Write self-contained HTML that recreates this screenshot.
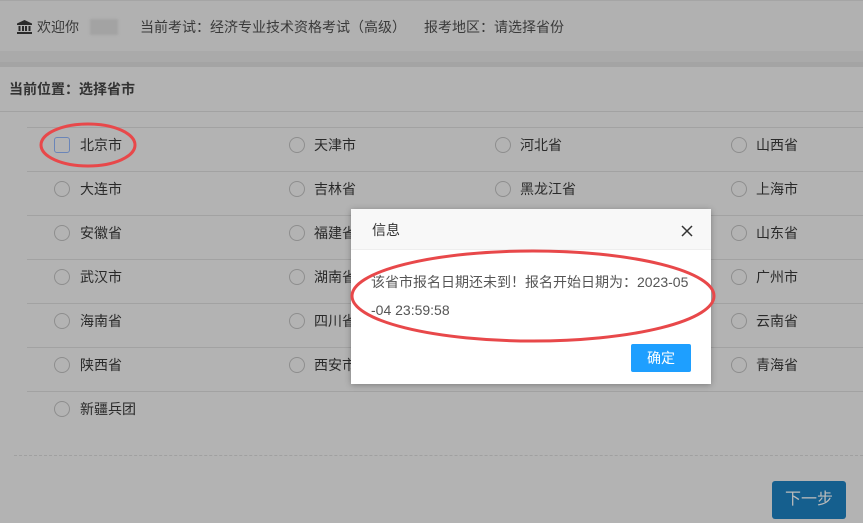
<!DOCTYPE html>
<html><head><meta charset="utf-8"><style>
*{margin:0;padding:0;box-sizing:border-box}
body{width:863px;height:523px;overflow:hidden;background:#b3b3b3;font-family:"Liberation Sans","Noto Sans CJK SC",sans-serif;font-size:14px;line-height:18px;color:#2e2e2e;position:relative}
.hdr{position:absolute;left:0;top:0;width:863px;height:51px;background:#b1b1b1;border-top:1px solid #a5a5a5}
.hdr span{position:absolute;top:17px;color:#3a3a3a}
.band1{position:absolute;left:0;top:51px;width:863px;height:11px;background:#aaaaaa}
.band2{position:absolute;left:0;top:62px;width:863px;height:5px;background:#a4a4a4}
.pos{position:absolute;left:9px;top:80px;font-weight:bold;color:#333}
.l{position:absolute;height:1px;background:#a2a2a2}
.r{position:absolute;width:16px;height:16px;border:1px solid #8e8e8e;border-radius:50%;background:#b3b3b3}
.t{position:absolute;color:#2a2a2a}
.modal{position:absolute;left:351px;top:209px;width:360px;height:175px;background:#fff;box-shadow:0 1px 6px rgba(0,0,0,.3)}
.mh{height:41px;background:#f8f8f8;border-bottom:1px solid #eee;padding:12px 0 0 21px;color:#333}
.mb{padding:18px 20px 0 20px;line-height:28px;color:#555}
.ok{position:absolute;left:280px;top:135px;width:60px;height:28px;background:#1e9fff;color:#fff;border-radius:2px;text-align:center;line-height:28px}
.next{position:absolute;left:772px;top:481px;width:74px;height:38px;background:#155f8e;color:#bbb;border-radius:3px;text-align:center;line-height:38px;font-size:16px}
</style></head><body>
<div class="hdr">
<svg style="position:absolute;left:17px;top:19px" width="15" height="14" viewBox="0 0 15 14"><path d="M7.5 0L0 3.5V5H15V3.5Z M1.5 6H3.5V11H1.5Z M5 6H7V11H5Z M8 6H10V11H8Z M11.5 6H13.5V11H11.5Z M0 12H15V14H0Z" fill="#2a2a2a"/></svg>
<span style="left:37px">欢迎你</span>
<div style="position:absolute;left:90px;top:18px;width:28px;height:16px;background:#a3a3a3;filter:blur(1px)"></div>
<span style="left:140px">当前考试：经济专业技术资格考试（高级）</span>
<span style="left:424px">报考地区：请选择省份</span>
</div>
<div class="band1"></div><div class="band2"></div>
<div class="pos">当前位置：选择省市</div>
<div class="l" style="left:0;top:111px;width:863px"></div>
<div class="l" style="left:27px;top:127px;width:836px"></div>
<div class="l" style="left:27px;top:171px;width:836px"></div>
<div class="l" style="left:27px;top:215px;width:836px"></div>
<div class="l" style="left:27px;top:259px;width:836px"></div>
<div class="l" style="left:27px;top:303px;width:836px"></div>
<div class="l" style="left:27px;top:347px;width:836px"></div>
<div class="l" style="left:27px;top:391px;width:836px"></div>
<div style="position:absolute;left:14px;top:455px;width:849px;border-top:1px dashed #a0a0a0"></div>

<div class="r" style="left:54px;top:137px;border-radius:3px;border-color:#6a85b8"></div><div class="t" style="left:80px;top:136px">北京市</div>
<div class="r" style="left:289px;top:137px"></div><div class="t" style="left:314px;top:136px">天津市</div>
<div class="r" style="left:495px;top:137px"></div><div class="t" style="left:520px;top:136px">河北省</div>
<div class="r" style="left:731px;top:137px"></div><div class="t" style="left:756px;top:136px">山西省</div>

<div class="r" style="left:54px;top:181px"></div><div class="t" style="left:80px;top:180px">大连市</div>
<div class="r" style="left:289px;top:181px"></div><div class="t" style="left:314px;top:180px">吉林省</div>
<div class="r" style="left:495px;top:181px"></div><div class="t" style="left:520px;top:180px">黑龙江省</div>
<div class="r" style="left:731px;top:181px"></div><div class="t" style="left:756px;top:180px">上海市</div>

<div class="r" style="left:54px;top:225px"></div><div class="t" style="left:80px;top:224px">安徽省</div>
<div class="r" style="left:289px;top:225px"></div><div class="t" style="left:314px;top:224px">福建省</div>
<div class="r" style="left:731px;top:225px"></div><div class="t" style="left:756px;top:224px">山东省</div>

<div class="r" style="left:54px;top:269px"></div><div class="t" style="left:80px;top:268px">武汉市</div>
<div class="r" style="left:289px;top:269px"></div><div class="t" style="left:314px;top:268px">湖南省</div>
<div class="r" style="left:731px;top:269px"></div><div class="t" style="left:756px;top:268px">广州市</div>

<div class="r" style="left:54px;top:313px"></div><div class="t" style="left:80px;top:312px">海南省</div>
<div class="r" style="left:289px;top:313px"></div><div class="t" style="left:314px;top:312px">四川省</div>
<div class="r" style="left:731px;top:313px"></div><div class="t" style="left:756px;top:312px">云南省</div>

<div class="r" style="left:54px;top:357px"></div><div class="t" style="left:80px;top:356px">陕西省</div>
<div class="r" style="left:289px;top:357px"></div><div class="t" style="left:314px;top:356px">西安市</div>
<div class="r" style="left:731px;top:357px"></div><div class="t" style="left:756px;top:356px">青海省</div>

<div class="r" style="left:54px;top:401px"></div><div class="t" style="left:80px;top:400px">新疆兵团</div>

<svg style="position:absolute;left:0;top:0" width="863" height="523"><ellipse cx="88" cy="145" rx="47" ry="21" fill="none" stroke="#e8484a" stroke-width="3"/></svg>

<div class="modal">
<div class="mh">信息</div>
<svg style="position:absolute;left:330px;top:16px" width="12" height="12" viewBox="0 0 12 12"><path d="M1 1L11 11M11 1L1 11" stroke="#333" stroke-width="1.5"/></svg>
<div class="mb">该省市报名日期还未到！报名开始日期为：2023-05<br>-04 23:59:58</div>
<div class="ok">确定</div>
</div>
<svg style="position:absolute;left:0;top:0" width="863" height="523"><ellipse cx="533" cy="296" rx="181" ry="45" fill="none" stroke="#e8484a" stroke-width="3"/></svg>

<div class="next">下一步</div>
</body></html>
